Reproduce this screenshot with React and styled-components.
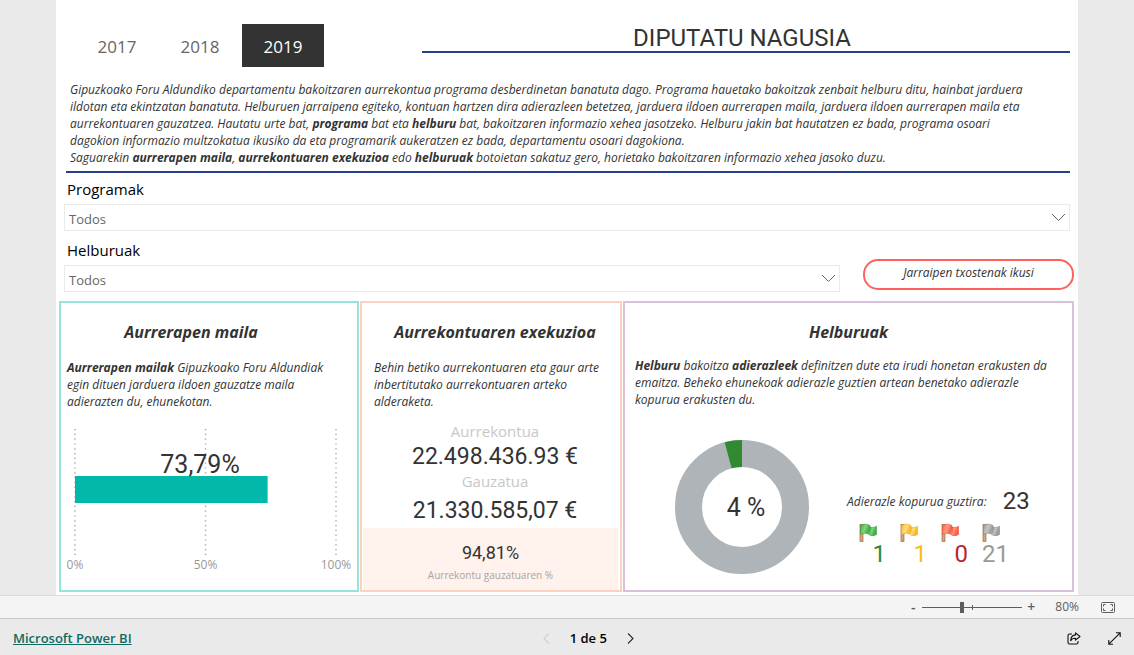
import React, { useState } from "react";
import styled, { createGlobalStyle } from "styled-components";

const flags = [
  { id: "green", count: 1, color: "#2e8b3a", light: "#7ed67a", main: "#3fae49", dark: "#2b8a38" },
  { id: "yellow", count: 1, color: "#f2c111", light: "#ffdf80", main: "#fbb829", dark: "#e09c14" },
  { id: "red", count: 0, color: "#b8282c", light: "#ff9a80", main: "#fb5f43", dark: "#d9432b" },
  { id: "gray", count: 21, color: "#999999", light: "#c4c4c4", main: "#9c9c9c", dark: "#7f7f7f" },
];

function Select({ id, label }) {
  return (
    <Field>
      <FieldLabel htmlFor={id}>{label}</FieldLabel>
      <SelectBox>
        <SelectInput id={id} defaultValue="todos">
          <option value="todos">Todos</option>
        </SelectInput>
        <SelectArrow width="15" height="9" viewBox="0 0 15 9" fill="none" stroke="#666">
          <path d="M1 1l6.5 6.5L14 1" />
        </SelectArrow>
      </SelectBox>
    </Field>
  );
}

function ProgressChart({ value }) {
  const left = 14;
  const width = 261;
  const ticks = [0, 50, 100];
  return (
    <Chart viewBox="0 0 296 165" role="img" aria-label="Aurrerapen maila">
      {ticks.map((t) => (
        <line
          key={t}
          x1={left + (width * t) / 100}
          x2={left + (width * t) / 100}
          y1="5"
          y2="132"
          stroke="#a6a6a6"
          strokeWidth="1.5"
          strokeDasharray="1.2 3.6"
        />
      ))}
      <rect x={left} y="52" width={(width * value) / 100} height="27" fill="#01b8aa" />
      <ChartValue x="139" y="49">
        73,79%
      </ChartValue>
      {ticks.map((t) => (
        <ChartTick key={t} x={left + (width * t) / 100} y="145">
          {t}%
        </ChartTick>
      ))}
    </Chart>
  );
}

function Donut({ part, total }) {
  const r = 53.5;
  const length = 2 * Math.PI * r;
  const slice = (length * part) / total;
  return (
    <DonutSvg width="136" height="136" viewBox="0 0 136 136" role="img" aria-label="4 %">
      <g fill="none" strokeWidth="27" transform="rotate(-90 68 68)">
        <circle cx="68" cy="68" r={r} stroke="#aeb4b7" />
        <circle
          cx="68"
          cy="68"
          r={r}
          stroke="#318a31"
          strokeDasharray={`${slice} ${length}`}
          strokeDashoffset={slice - length}
        />
      </g>
      <DonutValue x="72" y="77">
        4 %
      </DonutValue>
    </DonutSvg>
  );
}

function Flag({ flag }) {
  return (
    <svg width="18" height="19" viewBox="0 0 18 19">
      <defs>
        <linearGradient id={`flag-${flag.id}`} x1="0" y1="0" x2="1" y2="0.3">
          <stop offset="0" stopColor={flag.main} />
          <stop offset="0.35" stopColor={flag.light} />
          <stop offset="0.6" stopColor={flag.main} />
          <stop offset="0.8" stopColor={flag.light} />
          <stop offset="1" stopColor={flag.main} />
        </linearGradient>
      </defs>
      <rect x="1" y="1.5" width="3" height="17" fill="#d9a577" stroke="#9b6a45" strokeWidth="0.7" />
      <path
        d="M1.5 2.5C4 .8 8 .6 11 2.4V4c2 .8 4.500.6 6.500-.8v8.300c-2.500 1.600-6 1.700-8-.3-2.500-1.400-5.500-1-8 .3z"
        fill={`url(#flag-${flag.id})`}
        stroke={flag.dark}
        strokeWidth="0.5"
      />
      <path d="M11 4v6.500" stroke={flag.dark} strokeWidth="0.8" opacity="0.6" />
    </svg>
  );
}

function App() {
  const [year, setYear] = useState("2019");
  const [zoom, setZoom] = useState(39);

  return (
    <Page>
      <GlobalStyle />
      <Canvas>
        <Report>
          <Header>
            <Years>
              {["2017", "2018", "2019"].map((y) => (
                <YearButton key={y} $active={y === year} onClick={() => setYear(y)}>
                  {y}
                </YearButton>
              ))}
            </Years>
            <Title>DIPUTATU NAGUSIA</Title>
          </Header>

          <Intro>
            Gipuzkoako Foru Aldundiko departamentu bakoitzaren aurrekontua programa desberdinetan
            banatuta dago. Programa hauetako bakoitzak zenbait helburu ditu, hainbat jarduera
            <br />
            ildotan eta ekintzatan banatuta. Helburuen jarraipena egiteko, kontuan hartzen dira
            adierazleen betetzea, jarduera ildoen aurrerapen maila, jarduera ildoen aurrerapen maila
            eta
            <br />
            aurrekontuaren gauzatzea. Hautatu urte bat, <b>programa</b> bat eta <b>helburu</b> bat,
            bakoitzaren informazio xehea jasotzeko. Helburu jakin bat hautatzen ez bada, programa
            osoari
            <br />
            dagokion informazio multzokatua ikusiko da eta programarik aukeratzen ez bada,
            departamentu osoari dagokiona.
            <br />
            Saguarekin <b>aurrerapen maila</b>, <b>aurrekontuaren exekuzioa</b> edo{" "}
            <b>helburuak</b> botoietan sakatuz gero, horietako bakoitzaren informazio xehea jasoko
            duzu.
          </Intro>

          <Filters>
            <Select id="programak" label="Programak" />
            <FilterRow>
              <Select id="helburuak" label="Helburuak" />
              <ReportButton>Jarraipen txostenak ikusi</ReportButton>
            </FilterRow>
          </Filters>

          <Cards>
            <Card $color="#99e3dd">
              <CardTitle $padding="0 36px 0 0">Aurrerapen maila</CardTitle>
              <CardText $indent={6}>
                <b>Aurrerapen mailak</b> Gipuzkoako Foru Aldundiak
                <br />
                egin dituen jarduera ildoen gauzatze maila
                <br />
                adierazten du, ehunekotan.
              </CardText>
              <ProgressChart value={73.79} />
            </Card>

            <Card $color="#fed0bf">
              <CardTitle $padding="0 0 0 8px">Aurrekontuaren exekuzioa</CardTitle>
              <CardText $indent={12}>
                Behin betiko aurrekontuaren eta gaur arte
                <br />
                inbertitutako aurrekontuaren arteko
                <br />
                alderaketa.
              </CardText>
              <Budget>
                <dt>Aurrekontua</dt>
                <dd>22.498.436.93 €</dd>
                <dt>Gauzatua</dt>
                <dd>21.330.585,07 €</dd>
              </Budget>
              <Ratio>
                <RatioValue>94,81%</RatioValue>
                <RatioLabel>Aurrekontu gauzatuaren %</RatioLabel>
              </Ratio>
            </Card>

            <Card $color="#d9c2d9">
              <CardTitle>Helburuak</CardTitle>
              <CardText $indent={10} $wide>
                <b>Helburu</b> bakoitza <b>adierazleek</b> definitzen dute eta irudi honetan
                erakusten da
                <br />
                emaitza. Beheko ehunekoak adierazle guztien artean benetako adierazle
                <br />
                kopurua erakusten du.
              </CardText>
              <Goals>
                <Donut part={1} total={23} />
                <div>
                  <Total>
                    <TotalLabel>Adierazle kopurua guztira:</TotalLabel>
                    <TotalValue>23</TotalValue>
                  </Total>
                  <FlagList>
                    {flags.map((flag) => (
                      <FlagItem key={flag.id} $color={flag.color}>
                        <Flag flag={flag} />
                        <span>{flag.count}</span>
                      </FlagItem>
                    ))}
                  </FlagList>
                </div>
              </Goals>
            </Card>
          </Cards>
        </Report>
      </Canvas>

      <ZoomBar>
        <ZoomButton aria-label="Zoom out" onClick={() => setZoom(zoom - 5)}>
          -
        </ZoomButton>
        <ZoomRange
          type="range"
          aria-label="Zoom"
          min="0"
          max="100"
          value={zoom}
          onChange={(e) => setZoom(Number(e.target.value))}
        />
        <ZoomButton aria-label="Zoom in" onClick={() => setZoom(zoom + 5)}>
          +
        </ZoomButton>
        <ZoomValue>80%</ZoomValue>
        <IconButton aria-label="Fit to page">
          <svg width="14" height="11" viewBox="0 0 14 11" fill="none" stroke="#605e5c">
            <rect x="0.5" y="0.5" width="13" height="10" rx="1" />
            <path d="M4.500 2.500h-2v2M9.500 2.500h2v2M4.500 8.500h-2v-2M9.500 8.500h2v-2" />
          </svg>
        </IconButton>
      </ZoomBar>

      <Footer>
        <BrandLink href="#powerbi">Microsoft Power BI</BrandLink>
        <Pager>
          <PagerButton aria-label="Previous page" disabled>
            <svg width="7" height="11" viewBox="0 0 7 11" fill="none" stroke="#bdbdbd">
              <path d="M6 .5l-5 5 5 5" />
            </svg>
          </PagerButton>
          <span>1 de 5</span>
          <PagerButton aria-label="Next page">
            <svg width="7" height="11" viewBox="0 0 7 11" fill="none" stroke="#333" strokeWidth="1.2">
              <path d="M1 .5l5 5-5 5" />
            </svg>
          </PagerButton>
        </Pager>
        <Actions>
          <IconButton aria-label="Share">
            <svg width="14" height="13" viewBox="0 0 14 13" fill="none" stroke="#111" strokeWidth="1.1">
              <path d="M5 2H2.500A1.500 1.500 0 0 0 1 3.500v7A1.500 1.500 0 0 0 2.500 12h7a1.500 1.500 0 0 0 1.500-1.500V9" />
              <path d="M8.500.8L13 4.500 8.500 8.200V6.200C6 6.100 4.500 7 3.700 8.800 3.800 5.400 5.500 3.200 8.500 2.900z" strokeLinejoin="round" />
            </svg>
          </IconButton>
          <IconButton aria-label="Full screen">
            <svg width="13" height="13" viewBox="0 0 13 13" fill="none" stroke="#111" strokeWidth="1.100">
              <path d="M8 .8h4.200V5M12.200.8L.8 12.200M.8 8v4.200H5" />
            </svg>
          </IconButton>
        </Actions>
      </Footer>
    </Page>
  );
}

const GlobalStyle = createGlobalStyle`
  * {
    box-sizing: border-box;
  }
  body {
    margin: 0;
    font-family: "Open Sans", "Noto Sans", sans-serif;
    color: #333;
  }
  button, select, input {
    font-family: inherit;
  }
  button {
    padding: 0;
    border: none;
    background: none;
    cursor: pointer;
  }
`;

const Page = styled.div`
  display: flex;
  flex-direction: column;
  min-height: 100vh;
  background-color: #eaeaea;
`;

const Canvas = styled.main`
  flex: 1;
  display: flex;
  padding: 0 56px;
`;

const Report = styled.div`
  flex: 1;
  min-width: 0;
  padding: 24px 4px 3px 3px;
  background-color: white;
`;

const Header = styled.header`
  display: flex;
  align-items: flex-start;
  justify-content: space-between;
  gap: 98px;
  padding: 0 4px 0 17px;
`;

const Years = styled.div`
  display: flex;
  gap: 1px;
`;

const YearButton = styled.button`
  width: 82px;
  height: 43px;
  padding-top: 2px;
  font-size: 17px;
  color: ${(props) => (props.$active ? "white" : "#666")};
  background-color: ${(props) => (props.$active ? "#333" : "transparent")};
`;

const Title = styled.h1`
  flex: 1;
  margin: 0;
  padding: 1px 8px 0 0;
  border-bottom: 2px solid #24418a;
  font-family: Roboto, sans-serif;
  font-size: 24px;
  font-weight: 400;
  line-height: 26px;
  text-align: center;
`;

const Intro = styled.p`
  margin: 14px 4px 0 7px;
  padding: 0 0 5px 4px;
  border-bottom: 2px solid #24418a;
  font-size: 12px;
  font-style: italic;
  line-height: 17px;
`;

const Filters = styled.section`
  display: flex;
  flex-direction: column;
  gap: 8px;
  padding: 5px 0 0 5px;

  > div:first-child {
    margin-right: 4px;
  }
`;

const FilterRow = styled.div`
  display: flex;
  align-items: flex-end;
  gap: 23px;
`;

const Field = styled.div`
  flex: 1;
`;

const FieldLabel = styled.label`
  display: block;
  padding-left: 3px;
  font-size: 15px;
  line-height: 22px;
  color: black;
`;

const SelectBox = styled.div`
  position: relative;
  margin-top: 4px;
`;

const SelectInput = styled.select`
  display: block;
  width: 100%;
  height: 27px;
  padding: 2px 4px 0;
  border: 1px solid #eaeaea;
  border-radius: 0;
  background-color: white;
  color: #666;
  font-size: 13px;
  appearance: none;
`;

const SelectArrow = styled.svg`
  position: absolute;
  top: 9px;
  right: 4px;
  pointer-events: none;
`;

const ReportButton = styled.button`
  width: 211px;
  height: 31px;
  margin-bottom: 2px;
  padding: 0 0 4px;
  border: 2px solid #fd625e;
  border-radius: 15px;
  color: #333;
  font-size: 12px;
  font-style: italic;
`;

const Cards = styled.section`
  display: grid;
  grid-template-columns: 300fr 262fr 451fr;
  gap: 1px;
  margin-top: 9px;
`;

const Card = styled.article`
  display: flex;
  flex-direction: column;
  min-width: 0;
  padding-top: 19px;
  border: 2px solid ${(props) => props.$color};
`;

const CardTitle = styled.h2`
  margin: 0;
  padding: ${(props) => props.$padding || 0};
  font-size: 16px;
  font-style: italic;
  font-weight: 700;
  line-height: 20px;
  text-align: center;
`;

const CardText = styled.p`
  margin: ${(props) => (props.$wide ? 15 : 17)}px 0 0;
  padding-left: ${(props) => props.$indent}px;
  font-size: 12px;
  font-style: italic;
  line-height: 17px;
  white-space: nowrap;
`;

const Chart = styled.svg`
  display: block;
  width: 100%;
  margin-top: 14px;
  padding-bottom: 1px;
`;

const ChartValue = styled.text`
  font-family: Roboto, sans-serif;
  font-size: 25px;
  fill: #333;
  text-anchor: middle;
`;

const ChartTick = styled.text`
  font-size: 12px;
  fill: #999;
  text-anchor: middle;
`;

const Budget = styled.dl`
  margin: 10px 0 0;
  padding-left: 8px;
  text-align: center;

  dt {
    font-size: 15px;
    line-height: 22px;
    color: #c8c8c8;
  }
  dd {
    margin: 0;
    padding-top: 1px;
    font-family: Roboto, sans-serif;
    font-size: 23px;
    line-height: 28px;
  }
  dd + dt {
    line-height: 20px;
    padding-bottom: 5px;
  }
`;

const Ratio = styled.div`
  flex: 1;
  margin: 3px 2px 0 1px;
  padding-top: 14px;
  background-color: #fff1ec;
  text-align: center;
`;

const RatioValue = styled.div`
  font-family: Roboto, sans-serif;
  font-size: 18px;
  line-height: 22px;
`;

const RatioLabel = styled.div`
  font-size: 10px;
  line-height: 22px;
  color: #a6a6a6;
`;

const Goals = styled.div`
  display: flex;
  gap: 37px;
  padding: 31px 0 0 49px;
`;

const DonutSvg = styled.svg`
  flex: none;
`;

const DonutValue = styled.text`
  font-family: Roboto, sans-serif;
  font-size: 25px;
  fill: #333;
  text-anchor: middle;
`;

const Total = styled.div`
  display: flex;
  align-items: center;
  gap: 16px;
  padding-top: 48px;
`;

const TotalLabel = styled.span`
  font-size: 12px;
  font-style: italic;
  white-space: nowrap;
`;

const TotalValue = styled.span`
  font-family: Roboto, sans-serif;
  font-size: 24px;
  line-height: 28px;
`;

const FlagList = styled.ul`
  display: flex;
  gap: 14px;
  margin: 8px 0 0;
  padding: 0 0 0 12px;
  list-style: none;
`;

const FlagItem = styled.li`
  display: flex;
  flex-direction: column;
  width: 27px;
  color: ${(props) => props.$color};
  font-family: Roboto, sans-serif;
  font-size: 24px;
  line-height: 24px;
  text-align: right;
`;

const ZoomBar = styled.div`
  display: flex;
  align-items: center;
  justify-content: flex-end;
  height: 23px;
  padding-right: 19px;
  border-top: 1px solid #dcdcdc;
  background-color: #f4f4f4;
  color: #605e5c;
`;

const ZoomButton = styled.button`
  width: 14px;
  margin: 0 2px;
  color: #605e5c;
  font-size: 14px;
  font-weight: 600;
  line-height: 20px;
`;

const ZoomRange = styled.input`
  width: 100px;
  height: 12px;
  margin: 0;
  appearance: none;
  background: linear-gradient(#605e5c, #605e5c) 50px 50% / 1px 5px no-repeat,
    linear-gradient(#605e5c, #605e5c) 0 50% / 100% 1px no-repeat;

  &::-webkit-slider-thumb {
    appearance: none;
    width: 4px;
    height: 11px;
    background-color: #605e5c;
  }
`;

const ZoomValue = styled.span`
  margin: 0 22px 0 15px;
  font-size: 12px;
  line-height: 20px;
`;

const Footer = styled.footer`
  display: flex;
  align-items: center;
  height: 37px;
  padding: 2px 13px 0;
  border-top: 1px solid #c8c8c8;
`;

const BrandLink = styled.a`
  color: #116b60;
  font-size: 13px;
  font-weight: 600;
`;

const Pager = styled.div`
  flex: 1;
  display: flex;
  align-items: center;
  justify-content: center;
  gap: 16px;
  color: black;
  font-size: 13px;
  font-weight: 600;
`;

const PagerButton = styled.button`
  display: flex;
  padding: 4px;
`;

const Actions = styled.div`
  display: flex;
  gap: 27px;
  padding-left: 22px;
`;

const IconButton = styled.button`
  display: flex;
`;

export default App;
